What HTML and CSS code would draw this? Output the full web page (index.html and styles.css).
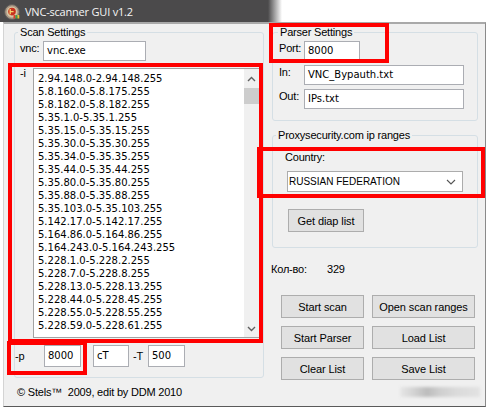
FILE: index.html
```html
<!DOCTYPE html>
<html>
<head>
<meta charset="utf-8">
<title>VNC-scanner GUI v1.2</title>
<link rel="stylesheet" href="styles.css">
</head>
<body>
<div class="screen">
  <div class="titlebar">
    <svg class="appicon" width="16" height="16" viewBox="0 0 16 16">
      <circle cx="8" cy="8" r="7.4" fill="#a89886" stroke="#5c5a58" stroke-width="1"/>
      <circle cx="8" cy="8" r="5.4" fill="#d7c7a4"/>
      <circle cx="8" cy="7.6" r="3.8" fill="#c8321e"/>
      <path d="M6.2 5 V10.2 M6.2 7.6 H9.6" stroke="#f3d66e" stroke-width="1.3" fill="none"/>
      <rect x="9.5" y="11" width="2" height="3.5" fill="#e23b2b"/>
      <rect x="11.5" y="11" width="2" height="3.5" fill="#3aa34a"/>
      <rect x="13.5" y="11" width="1.8" height="3.5" fill="#e8c43a"/>
    </svg>
    <span class="title">VNC-scanner GUI v1.2</span>
  </div>

  <div class="window">
    <div class="leftcol">
      <fieldset class="group scan">
        <legend>Scan Settings</legend>
        <div class="row vncrow">
          <span class="lbl lbl-vnc">vnc:</span>
          <div class="tb tb-vnc">vnc.exe</div>
        </div>
        <div class="row listrow">
          <span class="lbl lbl-i">-i</span>
          <div class="listbox">
            <ul class="items">
              <li>2.94.148.0-2.94.148.255</li>
              <li>5.8.160.0-5.8.175.255</li>
              <li>5.8.182.0-5.8.182.255</li>
              <li>5.35.1.0-5.35.1.255</li>
              <li>5.35.15.0-5.35.15.255</li>
              <li>5.35.30.0-5.35.30.255</li>
              <li>5.35.34.0-5.35.35.255</li>
              <li>5.35.44.0-5.35.44.255</li>
              <li>5.35.80.0-5.35.80.255</li>
              <li>5.35.88.0-5.35.88.255</li>
              <li>5.35.103.0-5.35.103.255</li>
              <li>5.142.17.0-5.142.17.255</li>
              <li>5.164.86.0-5.164.86.255</li>
              <li>5.164.243.0-5.164.243.255</li>
              <li>5.228.1.0-5.228.2.255</li>
              <li>5.228.7.0-5.228.8.255</li>
              <li>5.228.13.0-5.228.13.255</li>
              <li>5.228.44.0-5.228.45.255</li>
              <li>5.228.55.0-5.228.55.255</li>
              <li>5.228.59.0-5.228.61.255</li>
            </ul>
            <div class="vscroll">
              <svg class="arr" width="9" height="6" viewBox="0 0 9 6"><polyline points="1,5 4.5,1.5 8,5" fill="none" stroke="#606060" stroke-width="1.4"/></svg>
              <div class="thumb"></div>
              <div class="track"></div>
              <svg class="arr" width="9" height="6" viewBox="0 0 9 6"><polyline points="1,1 4.5,4.5 8,1" fill="none" stroke="#606060" stroke-width="1.4"/></svg>
            </div>
          </div>
        </div>
        <div class="row prow">
          <span class="lbl lbl-p">-p</span>
          <div class="tb tb-small">8000</div>
          <div class="tb tb-small tb-ct">cT</div>
          <span class="lbl lbl-t">-T</span>
          <div class="tb tb-small">500</div>
        </div>
      </fieldset>
      <div class="footer">© Stels™&nbsp; 2009, edit by DDM 2010</div>
    </div>

    <div class="rightcol">
      <fieldset class="group parser">
        <legend>Parser Settings</legend>
        <div class="row prow-r first">
          <span class="lbl lbl-r">Port:</span>
          <div class="tb tb-port">8000</div>
        </div>
        <div class="row prow-r">
          <span class="lbl lbl-r">In:</span>
          <div class="tb tb-file">VNC_Bypauth.txt</div>
        </div>
        <div class="row prow-r">
          <span class="lbl lbl-r">Out:</span>
          <div class="tb tb-file">IPs.txt</div>
        </div>
      </fieldset>

      <fieldset class="group proxy">
        <legend>Proxysecurity.com ip ranges</legend>
        <div class="lbl country-lbl">Country:</div>
        <div class="combo">
          <span class="combo-text">RUSSIAN FEDERATION</span>
          <svg class="chev" width="10" height="6" viewBox="0 0 10 6"><polyline points="1,1 5,5 9,1" fill="none" stroke="#555" stroke-width="1.1"/></svg>
        </div>
        <button class="btn btn-diap">Get diap list</button>
      </fieldset>

      <div class="count">
        <span class="lbl count-lbl">Кол-во:</span>
        <span class="lbl">329</span>
      </div>

      <div class="buttons">
        <button class="btn">Start scan</button>
        <button class="btn">Open scan ranges</button>
        <button class="btn">Start Parser</button>
        <button class="btn">Load List</button>
        <button class="btn">Clear List</button>
        <button class="btn">Save List</button>
      </div>

      <div class="smudge"></div>
    </div>
  </div>

  <div class="mark mark-list"></div>
  <div class="mark mark-p"></div>
  <div class="mark mark-port"></div>
  <div class="mark mark-country"></div>
</div>
</body>
</html>
```

FILE: styles.css
```css
* { box-sizing: border-box; }

html, body {
  margin: 0;
  padding: 0;
  background: #ffffff;
}

body {
  font-family: "Liberation Sans", Arial, sans-serif;
  font-size: 11px;
  color: #000;
}

.screen {
  position: relative;
  width: 487px;
  height: 409px;
  overflow: hidden;
  background: #ffffff;
}

/* ---------- title bar ---------- */
.titlebar {
  width: 284px;
  height: 22px;
  display: flex;
  align-items: center;
  padding-left: 4px;
  gap: 5px;
  background: linear-gradient(to right, #4b4a4b 0, #4b4a4b 268px, #ffffff 282px);
}

.appicon { flex: none; margin-top: 1px; }

.title {
  font-family: "Open Sans", "Liberation Sans", sans-serif;
  font-size: 11px;
  letter-spacing: -0.2px;
  color: #f6f6f6;
  line-height: 22px;
  padding-top: 1px;
}

/* ---------- window body ---------- */
.window {
  margin-left: 3px;
  width: 483px;
  height: 385px;
  background: #f0f0f0;
  border-top: 2px solid #a9a9a9;
  border-left: 1px solid #d4d4d4;
  border-right: 1px solid #8a8a8a;
  border-bottom: 1px solid #5a5a5a;
  display: flex;
  align-items: flex-start;
}

.lbl {
  line-height: 13px;
  letter-spacing: -0.2px;
  white-space: nowrap;
}

.row { display: flex; align-items: flex-start; }

/* group boxes */
.group {
  margin: 0;
  padding: 0;
  min-width: 0;
  border: 1px solid #d5dfe5;
  border-radius: 3px;
}

.group legend {
  margin-left: 3px;
  padding: 0 2px;
  line-height: 13px;
  letter-spacing: -0.2px;
}

/* text boxes */
.tb {
  height: 20px;
  padding: 0 3px;
  border: 1px solid #abadb3;
  background: #fff;
  color: #000;
  font-family: "DejaVu Sans", Verdana, sans-serif;
  font-size: 10px;
  line-height: 18px;
  white-space: nowrap;
  overflow: hidden;
}

/* ---------- left column ---------- */
.leftcol {
  margin-left: 10px;
  margin-top: 2px;
  width: 250px;
}

.scan { padding-bottom: 10px; }

.vncrow { margin-top: 2px; }
.lbl-vnc { width: 23px; margin-left: 5px; padding-top: 1px; }
.tb-vnc { width: 103px; }

.listrow { margin-top: 7px; }
.lbl-i { width: 13px; margin-left: 5px; margin-top: -1px; }

.listbox {
  width: 227px;
  height: 270px;
  border: 1px solid #a3a3a3;
  background: #fff;
  display: flex;
}

.items {
  flex: 1;
  margin: 0;
  padding: 3px 0 0 4px;
  list-style: none;
  overflow: hidden;
  font-family: "DejaVu Sans", Verdana, sans-serif;
  font-size: 10px;
  line-height: 13px;
  white-space: nowrap;
}

.vscroll {
  width: 15px;
  background: #f0f0f0;
  display: flex;
  flex-direction: column;
  align-items: center;
  padding: 7px 0 5px;
}

.vscroll .arr { flex: none; }

.thumb {
  width: 15px;
  height: 16px;
  margin-top: 6px;
  background: #cdcdcd;
}

.track { flex: 1; }

.prow { margin-top: 7px; }
.prow .tb { height: 22px; line-height: 20px; }
.lbl-p { width: 29px; padding-top: 5px; }
.tb-small { width: 37px; }
.tb-ct { margin-left: 12px; width: 36px; }
.lbl-t { width: 15px; margin-left: 4px; padding-top: 5px; }

.footer {
  margin-top: 8px;
  margin-left: 3px;
  line-height: 13px;
  letter-spacing: -0.2px;
  white-space: nowrap;
}

/* ---------- right column ---------- */
.rightcol {
  margin-left: 8px;
  margin-top: 2px;
  width: 206px;
}

.parser { padding-bottom: 11px; }
.parser legend { margin-left: 5px; }

.prow-r { margin-left: 6px; margin-top: 4px; }
.prow-r.first { margin-top: 2px; }
.lbl-r { width: 25px; padding-top: 1px; }
.tb-port { width: 56px; }
.tb-file { width: 160px; }

.proxy { margin-top: 8px; padding-bottom: 15px; }
.proxy legend { margin-left: 3px; }

.country-lbl { margin-top: 9px; margin-left: 12px; }

.combo {
  margin-top: 7px;
  margin-left: 14px;
  width: 176px;
  height: 21px;
  border: 1px solid #acacac;
  background: #fff;
  display: flex;
  align-items: center;
  justify-content: space-between;
  padding: 0 6px 0 1px;
}

.combo-text {
  font-size: 10px;
  letter-spacing: 0;
  white-space: nowrap;
}

.btn {
  display: block;
  margin: 0;
  padding: 0;
  height: 23px;
  border: 1px solid #adadad;
  background: #e1e1e1;
  color: #000;
  font-family: "Liberation Sans", Arial, sans-serif;
  font-size: 11px;
  letter-spacing: -0.1px;
  white-space: nowrap;
}

.btn-diap {
  margin-top: 17px;
  margin-left: 15px;
  width: 76px;
}

.count {
  margin-top: 15px;
  margin-left: -1px;
  display: flex;
}

.count-lbl { width: 56px; }

.buttons {
  margin-top: 19px;
  margin-left: 9px;
  display: grid;
  grid-template-columns: 83px 103px;
  grid-auto-rows: 23px;
  column-gap: 8px;
  row-gap: 8px;
}

.smudge {
  margin-top: 7px;
  margin-left: 128px;
  width: 80px;
  height: 10px;
  background: linear-gradient(to right, #e6e6e6 0, #d2d2d2 18%, #bcbcbc 34%, #cfcfcf 50%, #dadada 70%, #e2e2e2 100%);
  filter: blur(1.5px);
}

/* ---------- red annotation frames (overlay) ---------- */
.mark {
  position: absolute;
  border: 4px solid #ff0000;
  pointer-events: none;
}

.mark-list { left: 8px; top: 63px; width: 255px; height: 280px; }
.mark-p { left: 7px; top: 341px; width: 80px; height: 34px; }
.mark-port { left: 269px; top: 23px; width: 120px; height: 40px; }
.mark-country { left: 257px; top: 147px; width: 228px; height: 51px; }
```
